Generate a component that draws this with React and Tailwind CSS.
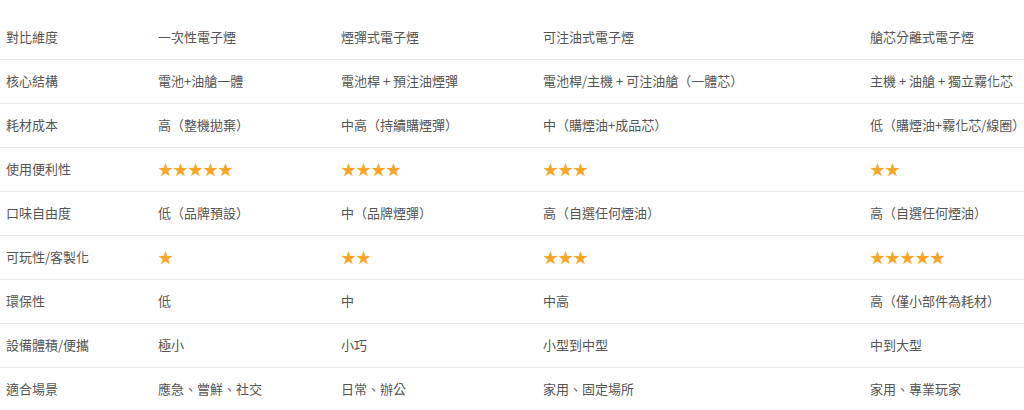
import React from "react";

const cols = ["w-[152px]", "w-[183px]", "w-[202px]", "w-[327px]", "w-[160px]"];

const rows = [
  ["對比維度", "一次性電子煙", "煙彈式電子煙", "可注油式電子煙", "艙芯分離式電子煙"],
  ["核心結構", "電池+油艙一體", "電池桿 + 預注油煙彈", "電池桿/主機 + 可注油艙（一體芯）", "主機 + 油艙 + 獨立霧化芯"],
  ["耗材成本", "高（整機拋棄）", "中高（持續購煙彈）", "中（購煙油+成品芯）", "低（購煙油+霧化芯/線圈）"],
  ["使用便利性", 5, 4, 3, 2],
  ["口味自由度", "低（品牌預設）", "中（品牌煙彈）", "高（自選任何煙油）", "高（自選任何煙油）"],
  ["可玩性/客製化", 1, 2, 3, 5],
  ["環保性", "低", "中", "中高", "高（僅小部件為耗材）"],
  ["設備體積/便攜", "極小", "小巧", "小型到中型", "中到大型"],
  ["適合場景", "應急、嘗鮮、社交", "日常、辦公", "家用、固定場所", "家用、專業玩家"],
];

function Stars({ n }) {
  return (
    <span className="text-[15px] tracking-[0px] text-[#f7a428]">
      {"★".repeat(n)}
    </span>
  );
}

export default function App() {
  return (
    <div className="w-[1024px] h-[410px] overflow-hidden bg-white pt-[15px] font-['Noto_Sans_CJK_TC','Noto_Sans',sans-serif] text-[13px] text-[#555]">
      <table className="w-full table-fixed border-collapse">
        <colgroup>
          {cols.map((c, i) => (
            <col key={i} className={c} />
          ))}
        </colgroup>
        <tbody>
          {rows.map((r, i) => (
            <tr key={i} className="h-[44px] border-b border-[#ececec]">
              {r.map((cell, j) => (
                <td key={j} className="px-[6px] align-middle whitespace-nowrap">
                  {typeof cell === "number" ? <Stars n={cell} /> : cell}
                </td>
              ))}
            </tr>
          ))}
        </tbody>
      </table>
    </div>
  );
}
